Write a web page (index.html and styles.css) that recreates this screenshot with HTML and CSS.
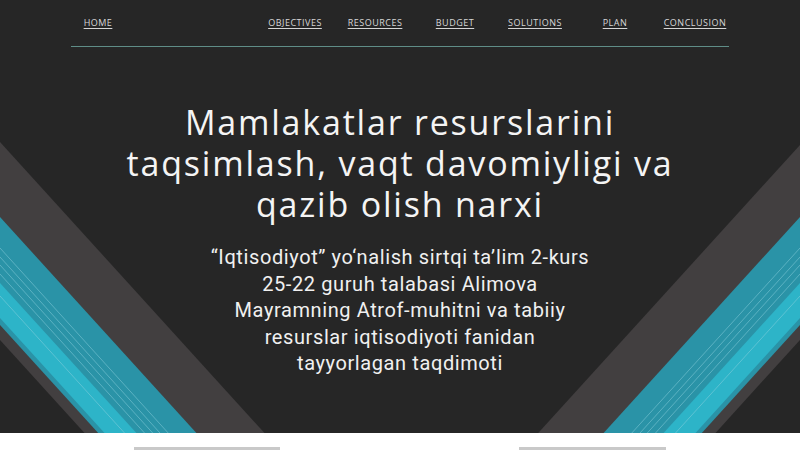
FILE: index.html
```html
<!DOCTYPE html>
<html lang="uz">
<head>
<meta charset="utf-8">
<title>Mamlakatlar resurslarini taqsimlash</title>
<link rel="stylesheet" href="styles.css">
</head>
<body>
<div class="hero">
  <svg class="stripes" viewBox="0 0 800 433" preserveAspectRatio="none" aria-hidden="true">
    <g class="side">
      <polygon class="s-gray" points="0,142 264.5,433 84.5,433 0,340"/>
      <polygon class="s-teal" points="0,217 196.4,433 98.2,433 0,325"/>
      <polygon class="s-bright" points="0,283 136.4,433 104.5,433 0,318"/>
      <g class="s-lines">
        <line x1="0" y1="248" x2="168.2" y2="433"/>
        <line x1="0" y1="257" x2="160" y2="433"/>
        <line x1="0" y1="265" x2="152.7" y2="433"/>
        <line x1="0" y1="274" x2="144.5" y2="433"/>
        <line x1="0" y1="296" x2="124.5" y2="433"/>
      </g>
    </g>
    <g class="side" transform="translate(800 0) scale(-1 1)">
      <polygon class="s-gray" points="0,145 261.8,433 84.5,433 0,340"/>
      <polygon class="s-teal" points="0,217 196.4,433 98.2,433 0,325"/>
      <polygon class="s-bright" points="0,283 136.4,433 104.5,433 0,318"/>
      <g class="s-lines">
        <line x1="0" y1="248" x2="168.2" y2="433"/>
        <line x1="0" y1="257" x2="160" y2="433"/>
        <line x1="0" y1="265" x2="152.7" y2="433"/>
        <line x1="0" y1="274" x2="144.5" y2="433"/>
        <line x1="0" y1="296" x2="124.5" y2="433"/>
      </g>
    </g>
  </svg>
  <header class="topbar">
    <nav class="nav">
      <a class="nav-home" href="#">HOME</a>
      <div class="nav-links">
        <a href="#">OBJECTIVES</a>
        <a href="#">RESOURCES</a>
        <a href="#">BUDGET</a>
        <a href="#">SOLUTIONS</a>
        <a href="#">PLAN</a>
        <a href="#">CONCLUSION</a>
      </div>
    </nav>
    <div class="rule"></div>
  </header>
  <main class="intro">
    <h1 class="title">Mamlakatlar resurslarini<br>taqsimlash, vaqt davomiyligi va<br>qazib olish narxi</h1>
    <p class="subtitle">“Iqtisodiyot” yo‘nalish sirtqi ta’lim 2-kurs<br>25-22 guruh talabasi Alimova<br>Mayramning Atrof-muhitni va tabiiy<br>resurslar iqtisodiyoti fanidan<br>tayyorlagan taqdimoti</p>
  </main>
</div>
<div class="below">
  <div class="thumb thumb-left"></div>
  <div class="thumb thumb-right"></div>
</div>
</body>
</html>
```

FILE: styles.css
```css
* { box-sizing: border-box; }
html, body { margin: 0; padding: 0; }
body {
  background: #ffffff;
  font-family: "Open Sans", "Liberation Sans", sans-serif;
  overflow: hidden;
}
.hero {
  position: relative;
  height: 433px;
  background: #262626;
  overflow: hidden;
}
.stripes {
  position: absolute;
  left: 0;
  top: 0;
  width: 800px;
  height: 433px;
}
.s-gray { fill: #423f40; }
.s-teal { fill: #2a93a7; }
.s-bright { fill: #2db4c8; }
.s-lines line { stroke: #8fd3e0; stroke-width: 0.7; opacity: 0.7; }

.topbar { position: relative; }
.nav {
  display: flex;
  padding: 16px 65px 0 71px;
  font-size: 9px;
  line-height: 13px;
  letter-spacing: 0.5px;
}
.nav a {
  color: #d6d6d6;
  text-decoration: underline;
  text-underline-offset: 2px;
  text-align: center;
}
.nav-home { width: 54px; }
.nav-links { display: flex; margin-left: auto; }
.nav-links a { width: 80px; }
.rule {
  margin: 17px 71px 0;
  height: 1px;
  background: #5f8d87;
}

.intro {
  position: relative;
  display: flex;
  flex-direction: column;
  align-items: center;
  text-align: center;
  color: #f4f4f4;
}
.title {
  margin: 55px 0 0;
  font-family: "Open Sans", "Liberation Sans", sans-serif;
  font-weight: 400;
  font-size: 34px;
  line-height: 41px;
  letter-spacing: 1.8px;
  white-space: nowrap;
}
.subtitle {
  margin: 19px 0 0;
  font-family: Roboto, "Liberation Sans", sans-serif;
  font-size: 20px;
  line-height: 26.5px;
  letter-spacing: 0.6px;
  color: #f0f0f0;
  white-space: nowrap;
}

.below {
  display: flex;
  height: 17px;
  padding-top: 14px;
  background: #ffffff;
}
.thumb { height: 3px; background: #c9c9c9; }
.thumb-left { width: 146px; margin-left: 134px; }
.thumb-right { width: 147px; margin-left: 239px; }
```
